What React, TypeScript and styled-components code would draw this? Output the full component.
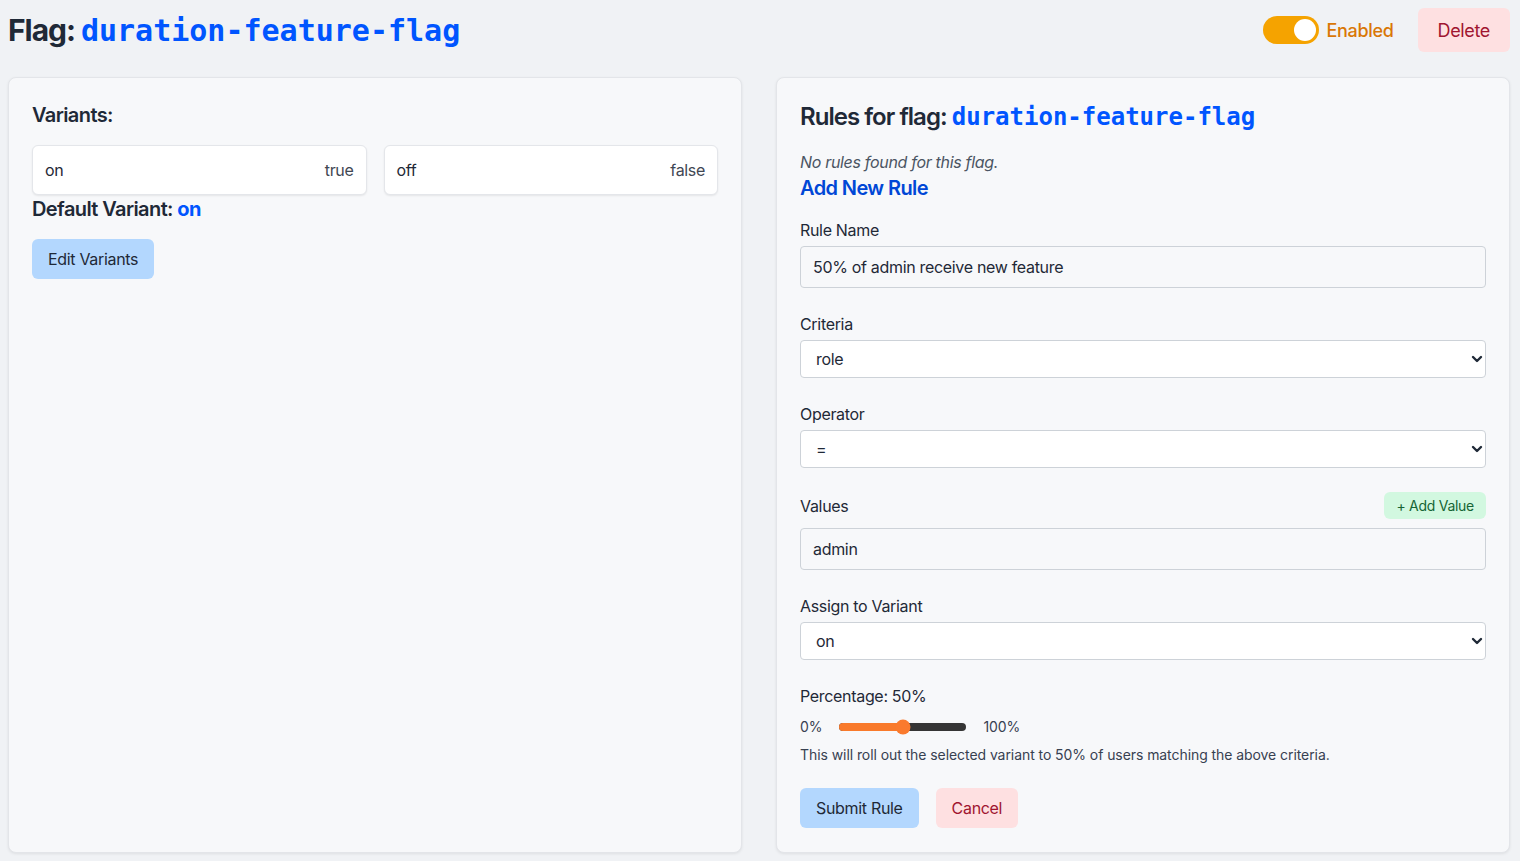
import React from "react";
import styled, { createGlobalStyle } from "styled-components";

const GlobalStyle = createGlobalStyle`
  * { box-sizing: border-box; }
  html, body { margin: 0; padding: 0; }
  body {
    background: #f0f2f5;
    font-family: Inter, "Noto Sans", "Liberation Sans", sans-serif;
    color: #1f2937;
    letter-spacing: -0.02em;
  }
  button, input, select { letter-spacing: -0.02em; }
`;

const Page = styled.div`
  padding: 8px 10px 9px 8px;
  height: 861px;
  display: flex;
  flex-direction: column;
`;

const Header = styled.header`
  display: flex;
  align-items: center;
  justify-content: space-between;
  height: 44px;
  flex-shrink: 0;
  margin-bottom: 25px;
`;

const Title = styled.h1<{ $size: number }>`
  margin: 0;
  font-size: ${(p) => p.$size}px;
  line-height: ${(p) => Math.round(p.$size * 1.25)}px;
  font-weight: 700;
  color: #1f2937;
  letter-spacing: -0.035em;
`;

const Mono = styled.span`
  font-family: "DejaVu Sans Mono", "Liberation Mono", monospace;
  font-weight: 700;
  color: #0055ff;
  letter-spacing: 0;
`;

const HeaderActions = styled.div`
  display: flex;
  align-items: center;
`;

const Toggle = styled.div<{ $on: boolean }>`
  position: relative;
  width: 56px;
  height: 28px;
  border-radius: 14px;
  background: ${(p) => (p.$on ? "#f5a300" : "#d1d5db")};
  flex-shrink: 0;
`;

const Knob = styled.span`
  position: absolute;
  top: 3px;
  right: 3px;
  width: 22px;
  height: 22px;
  border-radius: 50%;
  background: #ffffff;
`;

const ToggleLabel = styled.span`
  margin-left: 8px;
  margin-right: 24px;
  font-size: 18px;
  font-weight: 500;
  color: #d97706;
`;

const Button = styled.button<{ $variant: "primary" | "danger" | "success"; $size?: "sm" | "md" | "lg" }>`
  border: none;
  font-family: inherit;
  cursor: pointer;
  border-radius: 6px;
  font-weight: 400;
  height: ${(p) => (p.$size === "lg" ? 44 : p.$size === "sm" ? 27 : 40)}px;
  padding: 0 ${(p) => (p.$size === "lg" ? 20 : p.$size === "sm" ? 12 : 16)}px;
  font-size: ${(p) => (p.$size === "lg" ? 18 : p.$size === "sm" ? 14 : 16)}px;
  background: ${(p) =>
    p.$variant === "primary" ? "#b3d7fe" : p.$variant === "danger" ? "#fee0e1" : "#d2f8e0"};
  color: ${(p) =>
    p.$variant === "primary" ? "#1f2937" : p.$variant === "danger" ? "#a01530" : "#166534"};
`;

const Panels = styled.main`
  flex: 1;
  min-height: 0;
  display: grid;
  grid-template-columns: 1fr 1fr;
  gap: 34px;
`;

const Panel = styled.section`
  background: #f7f8fa;
  border: 1px solid #e3e5e9;
  border-radius: 8px;
  box-shadow: 0 1px 3px rgba(0, 0, 0, 0.08);
  padding: 23px 23px 24px;
`;

const SectionTitle = styled.h2<{ $color?: string }>`
  margin: 0;
  font-size: 20px;
  line-height: 28px;
  font-weight: 600;
  letter-spacing: -0.03em;
  color: ${(p) => p.$color || "#1f2937"};
`;

const VariantGrid = styled.div`
  display: grid;
  grid-template-columns: 1fr 1fr;
  gap: 17px;
  margin-top: 16px;
`;

const VariantCard = styled.div`
  display: flex;
  justify-content: space-between;
  align-items: center;
  background: #ffffff;
  border: 1px solid #e4e6ea;
  border-radius: 6px;
  box-shadow: 0 1px 2px rgba(0, 0, 0, 0.08);
  padding: 12px 12px;
  font-size: 16px;
  line-height: 24px;
`;

const VariantName = styled.span`
  color: #1f2937;
`;

const VariantValue = styled.span`
  color: #3f4753;
`;

const DefaultValue = styled.span`
  color: #0055ff;
  font-weight: 700;
`;

const LeftActions = styled.div`
  margin-top: 16px;
`;

const RulesTitle = styled.h2`
  margin: 0;
  font-size: 24px;
  line-height: 32px;
  font-weight: 600;
  letter-spacing: -0.04em;
  color: #1f2937;
`;

const Empty = styled.p`
  margin: 17px 0 0;
  font-size: 16px;
  line-height: 24px;
  font-style: italic;
  color: #4b5563;
`;

const Form = styled.form`
  margin-top: 16px;
  display: flex;
  flex-direction: column;
`;

const Field = styled.div`
  display: flex;
  flex-direction: column;
  margin-bottom: 24px;
`;

const Label = styled.label`
  font-size: 16px;
  line-height: 24px;
  color: #1f2937;
  margin-bottom: 4px;
`;

const LabelRow = styled.div`
  display: flex;
  justify-content: space-between;
  align-items: center;
  margin-bottom: 9px;
  ${Label} {
    margin-bottom: 0;
  }
`;

const TextInput = styled.input`
  height: 42px;
  padding: 8px 12px;
  font-family: inherit;
  font-size: 16px;
  color: #1f2937;
  background: #f7f8fa;
  border: 1px solid #cdd2d8;
  border-radius: 4px;
  outline: none;
`;

const SelectWrap = styled.div`
  position: relative;
`;

const Select = styled.select`
  width: 100%;
  height: 38px;
  padding: 0 30px 0 15px;
  appearance: none;
  font-family: inherit;
  font-size: 16px;
  color: #1f2937;
  background: #ffffff;
  border: 1px solid #cdd2d8;
  border-radius: 4px;
  outline: none;
`;

const Chevron = styled.svg`
  position: absolute;
  right: 3px;
  top: 50%;
  transform: translateY(-50%);
  pointer-events: none;
`;

const SliderRow = styled.div`
  display: flex;
  align-items: center;
  gap: 17px;
  font-size: 14px;
  line-height: 20px;
  letter-spacing: -0.005em;
  color: #374151;
  margin-top: 5px;
`;

const Track = styled.div`
  position: relative;
  width: 127px;
  height: 8px;
  border-radius: 4px;
  background: #353535;
`;

const TrackFill = styled.div`
  height: 100%;
  border-radius: 4px;
  background: #f97a2b;
`;

const Thumb = styled.span`
  position: absolute;
  top: 50%;
  width: 15px;
  height: 15px;
  border-radius: 50%;
  background: #fa7a2d;
  transform: translate(-50%, -50%);
`;

const Hint = styled.p`
  margin: 8px 0 -1px;
  font-size: 14px;
  line-height: 20px;
  letter-spacing: -0.005em;
  color: #374151;
`;

const FormActions = styled.div`
  display: flex;
  gap: 17px;
`;

function ChevronIcon() {
  return (
    <Chevron width="12" height="10" viewBox="0 0 12 10">
      <path d="M2 3 L6 7 L10 3" fill="none" stroke="#1f2937" strokeWidth="2.4" strokeLinecap="round" strokeLinejoin="round" />
    </Chevron>
  );
}

function SelectField({ id, label, value, options }: { id: string; label: string; value: string; options: string[] }) {
  return (
    <Field>
      <Label htmlFor={id}>{label}</Label>
      <SelectWrap>
        <Select id={id} defaultValue={value}>
          {options.map((o) => (
            <option key={o} value={o}>
              {o}
            </option>
          ))}
        </Select>
        <ChevronIcon />
      </SelectWrap>
    </Field>
  );
}

export default function App() {
  const flag = "duration-feature-flag";
  const variants = [
    { name: "on", value: "true" },
    { name: "off", value: "false" },
  ];
  const percent = 50;

  return (
    <>
      <GlobalStyle />
      <Page>
        <Header>
          <Title $size={30}>
            Flag: <Mono>{flag}</Mono>
          </Title>
          <HeaderActions>
            <Toggle $on>
              <Knob />
            </Toggle>
            <ToggleLabel>Enabled</ToggleLabel>
            <Button $variant="danger" $size="lg">Delete</Button>
          </HeaderActions>
        </Header>

        <Panels>
          <Panel>
            <SectionTitle>Variants:</SectionTitle>
            <VariantGrid>
              {variants.map((v) => (
                <VariantCard key={v.name}>
                  <VariantName>{v.name}</VariantName>
                  <VariantValue>{v.value}</VariantValue>
                </VariantCard>
              ))}
            </VariantGrid>
            <SectionTitle>
              Default Variant: <DefaultValue>on</DefaultValue>
            </SectionTitle>
            <LeftActions>
              <Button $variant="primary">Edit Variants</Button>
            </LeftActions>
          </Panel>

          <Panel>
            <RulesTitle>
              Rules for flag: <Mono>{flag}</Mono>
            </RulesTitle>
            <Empty>No rules found for this flag.</Empty>
            <SectionTitle $color="#0047d6">Add New Rule</SectionTitle>
            <Form onSubmit={(e) => e.preventDefault()}>
              <Field>
                <Label htmlFor="rule-name">Rule Name</Label>
                <TextInput id="rule-name" readOnly value="50% of admin receive new feature" />
              </Field>
              <SelectField id="criteria" label="Criteria" value="role" options={["role", "email", "country"]} />
              <SelectField id="operator" label="Operator" value="=" options={["=", "!=", "in"]} />
              <Field>
                <LabelRow>
                  <Label htmlFor="values">Values</Label>
                  <Button type="button" $variant="success" $size="sm">+ Add Value</Button>
                </LabelRow>
                <TextInput id="values" readOnly value="admin" />
              </Field>
              <SelectField id="assign" label="Assign to Variant" value="on" options={["on", "off"]} />
              <Field>
                <Label>Percentage: {percent}%</Label>
                <SliderRow>
                  <span>0%</span>
                  <Track>
                    <TrackFill style={{ width: `${percent}%` }} />
                    <Thumb style={{ left: `${percent}%` }} />
                  </Track>
                  <span>100%</span>
                </SliderRow>
                <Hint>This will roll out the selected variant to {percent}% of users matching the above criteria.</Hint>
              </Field>
              <FormActions>
                <Button type="submit" $variant="primary">Submit Rule</Button>
                <Button type="button" $variant="danger">Cancel</Button>
              </FormActions>
            </Form>
          </Panel>
        </Panels>
      </Page>
    </>
  );
}
